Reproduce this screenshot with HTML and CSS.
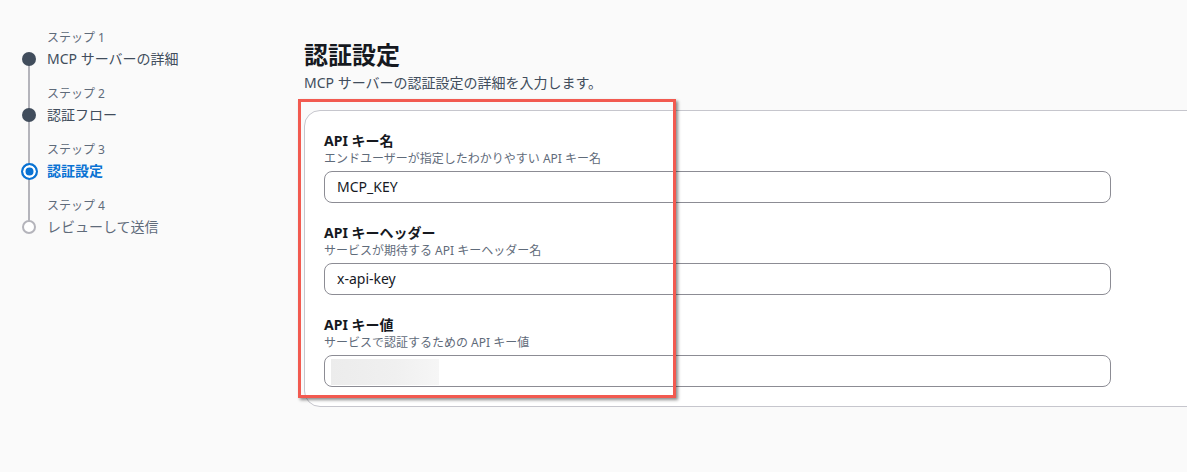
FILE: index.html
```html
<!DOCTYPE html>
<html lang="ja">
<head>
<meta charset="utf-8">
<title>認証設定</title>
<link rel="stylesheet" href="styles.css">
</head>
<body>
<div class="page">
  <nav class="wizard-nav">
    <ol class="steps">
      <li class="step done">
        <span class="step-num">ステップ 1</span>
        <span class="node"><span class="dot"></span></span>
        <span class="step-title">MCP サーバーの詳細</span>
      </li>
      <li class="step done">
        <span class="step-num">ステップ 2</span>
        <span class="node"><span class="dot"></span></span>
        <span class="step-title">認証フロー</span>
      </li>
      <li class="step current">
        <span class="step-num">ステップ 3</span>
        <span class="node"><span class="dot"></span></span>
        <span class="step-title">認証設定</span>
      </li>
      <li class="step todo">
        <span class="step-num">ステップ 4</span>
        <span class="node"><span class="dot"></span></span>
        <span class="step-title">レビューして送信</span>
      </li>
    </ol>
  </nav>
  <main class="content">
    <h1 class="title">認証設定</h1>
    <p class="subtitle">MCP サーバーの認証設定の詳細を入力します。</p>
    <section class="card">
      <div class="field">
        <label class="label">API キー名</label>
        <span class="desc">エンドユーザーが指定したわかりやすい API キー名</span>
        <div class="input">MCP_KEY</div>
      </div>
      <div class="field">
        <label class="label">API キーヘッダー</label>
        <span class="desc">サービスが期待する API キーヘッダー名</span>
        <div class="input">x-api-key</div>
      </div>
      <div class="field">
        <label class="label">API キー値</label>
        <span class="desc">サービスで認証するための API キー値</span>
        <div class="input"><span class="masked"></span></div>
      </div>
    </section>
  </main>
</div>
<div class="highlight"></div>
</body>
</html>
```
FILE: styles.css
```css
html, body {
  margin: 0;
  padding: 0;
}
body {
  background: #fafafa;
  font-family: "Noto Sans", "Noto Sans CJK JP", sans-serif;
  color: #16191f;
  width: 1187px;
  height: 472px;
  overflow: hidden;
  position: relative;
}
.page {
  display: flex;
  align-items: flex-start;
}
.wizard-nav {
  flex: none;
  width: 282px;
  padding: 30px 0 0 22px;
}
.steps {
  list-style: none;
  margin: 0;
  padding: 0;
}
.step {
  display: grid;
  grid-template-columns: 14px 1fr;
  grid-template-rows: auto 20px;
  column-gap: 11px;
}
.step-num {
  grid-column: 2;
  grid-row: 1;
  font-size: 12px;
  line-height: 16px;
  color: #5f6b7a;
  padding: 17px 0 3px;
}
.step:first-child .step-num {
  padding-top: 0;
}
.step:not(:first-child)::before {
  content: "";
  grid-column: 1;
  grid-row: 1;
  justify-self: center;
  width: 2px;
  background: #b4b4bb;
}
.node {
  grid-column: 1;
  grid-row: 2;
  position: relative;
  display: flex;
  align-items: center;
  justify-content: center;
  background-repeat: no-repeat;
}
.step:not(:first-child) .node {
  background-image: linear-gradient(#b4b4bb, #b4b4bb);
  background-size: 2px 50%;
  background-position: center top;
}
.step:not(:last-child) .node {
  background-image: linear-gradient(#b4b4bb, #b4b4bb), linear-gradient(#b4b4bb, #b4b4bb);
  background-size: 2px 50%, 2px 50%;
  background-position: center top, center bottom;
}
.step:first-child .node {
  background-image: linear-gradient(#b4b4bb, #b4b4bb);
  background-size: 2px 50%;
  background-position: center bottom;
}
.step:not(:last-child)::after {
  content: "";
}
.dot {
  box-sizing: border-box;
  width: 14px;
  height: 14px;
  border-radius: 50%;
  background: #414d5c;
}
.current .dot {
  width: 17px;
  height: 17px;
  flex: none;
  background: #0972d3;
  border: 2px solid #0972d3;
  box-shadow: inset 0 0 0 2.5px #fff;
}
.todo .dot {
  background: #fff;
  border: 2px solid #b4b4bb;
}
.step:not(:last-child) {
  margin-bottom: 0;
}
.step-title {
  grid-column: 2;
  grid-row: 2;
  font-size: 14px;
  line-height: 20px;
  color: #414d5c;
  white-space: nowrap;
}
.current .step-title {
  color: #0972d3;
  font-weight: 700;
}
.todo .step-title {
  color: #5f6b7a;
}

.content {
  flex: none;
  padding-top: 40px;
}
.title {
  margin: 0;
  font-size: 24px;
  line-height: 30px;
  font-weight: 700;
  color: #16191f;
}
.subtitle {
  margin: 3px 0 0;
  font-size: 14px;
  line-height: 20px;
  color: #414d5c;
}
.card {
  margin-top: 17px;
  width: 940px;
  box-sizing: border-box;
  background: #fff;
  border: 1px solid #c6c6cd;
  border-radius: 16px;
  padding: 20px 19px 19px 19px;
  display: flex;
  flex-direction: column;
  gap: 20px;
}
.field {
  display: flex;
  flex-direction: column;
}
.label {
  font-size: 14px;
  line-height: 20px;
  font-weight: 700;
  color: #16191f;
}
.desc {
  font-size: 12px;
  line-height: 16px;
  color: #5f6b7a;
}
.input {
  margin-top: 4px;
  box-sizing: border-box;
  width: 787px;
  height: 32px;
  border: 1px solid #8c8c94;
  border-radius: 8px;
  padding: 0 12px;
  font-size: 14px;
  line-height: 30px;
  color: #16191f;
  display: flex;
  align-items: center;
}
.masked {
  width: 108px;
  height: 26px;
  margin-left: -6px;
  margin-top: 2px;
  background: linear-gradient(90deg, #ececec, #f0f0f0 60%, #f6f6f6);
}
.highlight {
  position: absolute;
  left: 298px;
  top: 99px;
  width: 378px;
  height: 299px;
  box-sizing: border-box;
  border: 3px solid #f25a50;
  box-shadow: 2px 2px 3px rgba(0, 0, 0, 0.45);
  pointer-events: none;
}
```
